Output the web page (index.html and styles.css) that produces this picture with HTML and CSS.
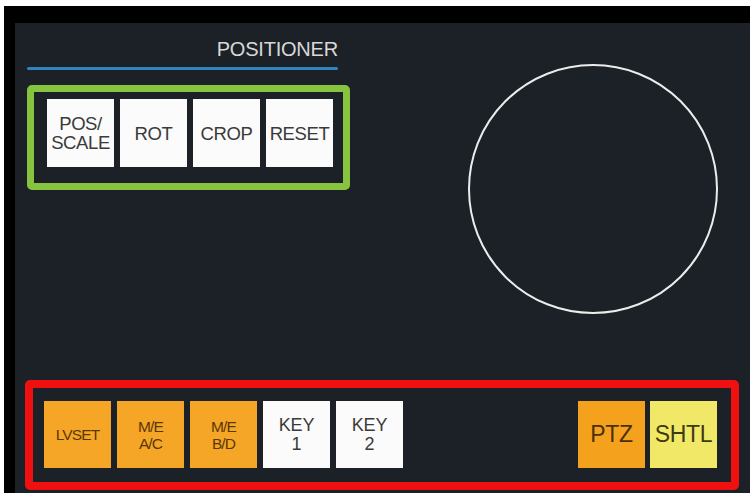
FILE: index.html
```html
<!DOCTYPE html>
<html>
<head>
<meta charset="utf-8">
<link rel="stylesheet" href="styles.css">
</head>
<body>
<div class="frame">
  <div class="panel">
    <div class="top-row">
      <div class="positioner">
        <div class="title">POSITIONER</div>
        <div class="rule"></div>
        <div class="green-box">
          <div class="btn white two">POS/<br>SCALE</div>
          <div class="btn white">ROT</div>
          <div class="btn white">CROP</div>
          <div class="btn white">RESET</div>
        </div>
      </div>
      <div class="joystick"></div>
    </div>
    <div class="red-box">
      <div class="btn orange small">LVSET</div>
      <div class="btn orange small two">M/E<br>A/C</div>
      <div class="btn orange small two">M/E<br>B/D</div>
      <div class="btn white key two">KEY<br>1</div>
      <div class="btn white key two">KEY<br>2</div>
      <div class="btn orange big push">PTZ</div>
      <div class="btn yellow big">SHTL</div>
    </div>
  </div>
</div>
</body>
</html>
```
FILE: styles.css
```css
html, body {
  margin: 0;
  padding: 0;
  background: #ffffff;
}
body {
  font-family: "Liberation Sans", Arial, sans-serif;
}
.frame {
  margin: 6px 0 0 4px;
  width: 746px;
  height: 487px;
  box-sizing: border-box;
  border-top: 17px solid #000;
  border-left: 11px solid #000;
  background: #1c2127;
}
.panel {
  height: 100%;
  display: flex;
  flex-direction: column;
}
.top-row {
  display: flex;
  align-items: flex-start;
}
.positioner {
  margin-left: 12px;
  padding-top: 16px;
  width: 323px;
}
.title {
  width: 311px;
  text-align: right;
  font-size: 20px;
  line-height: 20px;
  color: #d8d8d8;
  letter-spacing: -0.2px;
}
.rule {
  margin-top: 8px;
  width: 311px;
  height: 3px;
  background: #2f86bd;
  border-radius: 2px;
}
.green-box {
  margin-top: 15px;
  box-sizing: border-box;
  width: 323px;
  height: 105px;
  border: 7px solid #86c43f;
  border-radius: 5px;
  padding: 7px 0 0 13px;
  display: flex;
  gap: 6px;
}
.joystick {
  margin: 41px 0 0 118px;
  width: 250px;
  height: 250px;
  box-sizing: border-box;
  border: 2px solid #ececec;
  border-radius: 50%;
}
.red-box {
  margin: auto 0 3px 10px;
  box-sizing: border-box;
  width: 714px;
  height: 110px;
  border: 8px solid #f01010;
  border-radius: 5px;
  padding: 13px 14px 0 11px;
  display: flex;
  gap: 6px;
}
.btn {
  width: 67px;
  height: 67px;
  flex: none;
  display: flex;
  align-items: center;
  justify-content: center;
  text-align: center;
  font-size: 18.5px;
  line-height: 19px;
  color: #3a3a3a;
  letter-spacing: -0.4px;
}
.green-box .btn {
  height: 68px;
}
.white {
  background: #fbfbfb;
}
.orange {
  background: #f6a627;
  color: #5a3806;
}
.yellow {
  background: #f2e868;
  color: #3d3a12;
}
.small {
  font-size: 15.5px;
  line-height: 17px;
  letter-spacing: -0.9px;
}
.key {
  font-size: 18px;
  line-height: 19px;
  letter-spacing: -0.2px;
}
.big {
  font-size: 23px;
  letter-spacing: -0.3px;
}
.orange.big {
  background: #f4a11e;
  color: #4a3008;
}
.push {
  margin-left: auto;
}
.push + .btn {
  margin-left: -1px;
}
```
